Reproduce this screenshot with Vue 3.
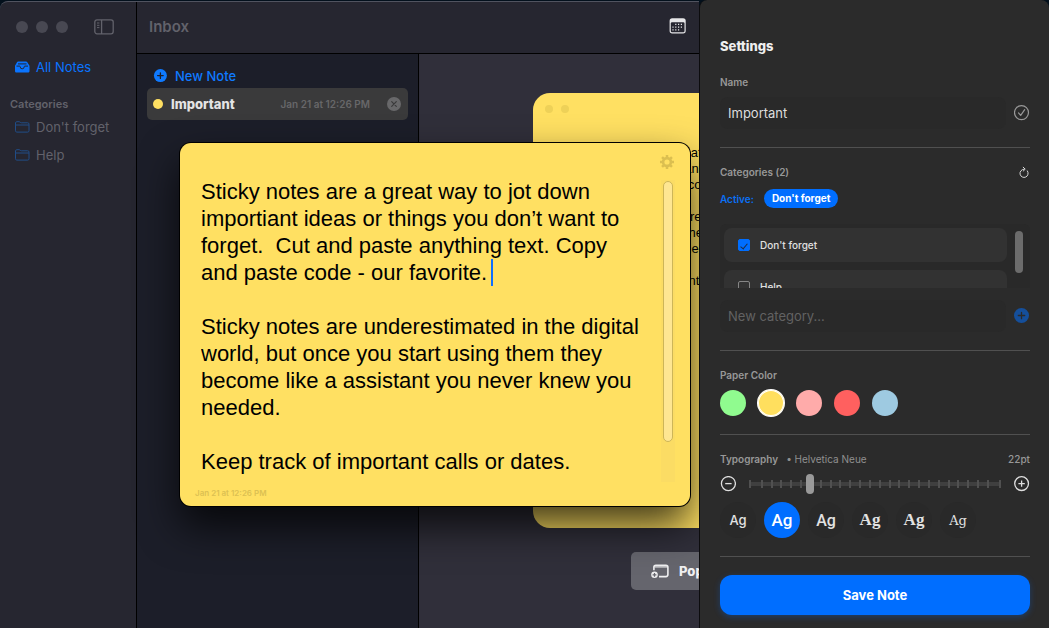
<template>
  <div class="desktop">
    <main class="app-window">
      <aside class="sidebar">
        <div class="sidebar__bar">
          <span v-for="n in 3" :key="n" class="sidebar__light"></span>
          <button class="icon-button sidebar__toggle" type="button" aria-label="Toggle sidebar">
            <svg width="20" height="16" viewBox="0 0 20 16" fill="none" stroke="currentColor">
              <rect x="0.8" y="0.8" width="18.4" height="14" rx="2.2" stroke-width="1.3" />
              <path d="M7.6 1v14" stroke-width="1.3" />
              <path d="M3 4h2.4M3 6.3h2.4M3 8.6h2.4" stroke-width="1" />
            </svg>
          </button>
        </div>
        <nav class="sidebar__nav">
          <a class="sidebar__link sidebar__link--active" href="#all">
            <svg width="16" height="12" viewBox="0 0 16 12">
              <path
                d="M4.2.5h7.8c.6 0 1 .3 1.3.8l2.2 3.5V10c0 1-.7 1.600-1.600 1.600H2.600C1.700 11.600 1 11 1 10V4.800l2-3.500C3.300.8 3.600.5 4.200.5z"
                fill="currentColor"
              />
              <path d="M2.500 5.100h3.100c.4 0 .5.3.6.7a2 2 0 0 0 4 0c.1-.4.2-.7.6-.7H14M4 2.900h8.500" fill="none" stroke="#262630" stroke-width="1" />
            </svg>
            <span>All Notes</span>
          </a>
          <h2 class="sidebar__heading">Categories</h2>
          <a v-for="name in categoryNames" :key="name" class="sidebar__link" href="#category">
            <svg class="sidebar__folder" width="16" height="12" viewBox="0 0 16 12" fill="none" stroke="currentColor">
              <path d="M1.500 9.800V2c0-.8.5-1.300 1.300-1.300h2.400c.9 0 1.100 1.100 2 1.100h6.500c.9 0 1.300.5 1.300 1.300v6.700c0 .8-.5 1.300-1.300 1.300H2.800c-.8 0-1.300-.5-1.300-1.300zM1.500 4H15" />
            </svg>
            <span>{{ name }}</span>
          </a>
        </nav>
      </aside>

      <div class="workspace">
        <header class="toolbar">
          <h1 class="toolbar__title">Inbox</h1>
          <button class="icon-button toolbar__calendar" type="button" aria-label="Calendar">
            <svg width="18" height="17" viewBox="0 0 18 17">
              <path d="M3.200.2h10.900c1.700 0 2.600 1 2.600 2.500V13c0 1.600-.9 2.500-2.600 2.500H3.200C1.500 15.500.6 14.600.6 13V2.700C.6 1.200 1.500.2 3.200.2z" fill="currentColor" />
              <rect x="1.800" y="4.200" width="13.700" height="10" rx="1.200" fill="#262630" />
              <path d="M6.200 6.400h7.600M3.400 9.100h10.400M3.400 11.800h7.600" stroke="currentColor" stroke-width="1.200" stroke-dasharray="1.200 1.600" />
            </svg>
          </button>
        </header>

        <div class="workspace__panes">
          <section class="note-list">
            <button class="note-list__new" type="button">
              <svg width="14" height="14" viewBox="0 0 14 14">
                <circle cx="7.400" cy="6.600" r="6.500" fill="currentColor" />
                <path d="M7.400 3.800v5.600M4.600 6.600h5.600" stroke="#1c1e29" stroke-width="1.300" stroke-linecap="round" />
              </svg>
              <span>New Note</span>
            </button>
            <div class="note-list__item">
              <span class="note-list__dot"></span>
              <strong class="note-list__name">Important</strong>
              <time class="note-list__time">{{ stamp }}</time>
              <button class="icon-button note-list__delete" type="button" aria-label="Delete note">
                <svg width="14" height="14" viewBox="0 0 14 14">
                  <circle cx="7" cy="7" r="7" fill="currentColor" />
                  <path d="M4.700 4.700l4.600 4.600M9.300 4.700l-4.600 4.600" stroke="#3a3a3b" stroke-width="1.200" stroke-linecap="round" />
                </svg>
              </button>
            </div>
          </section>

          <section class="preview">
            <article class="preview__card">
              <div class="preview__dots"><span></span><span></span></div>
              <p class="preview__text">{{ noteText }}</p>
            </article>
            <button class="preview__popout" type="button">
              <svg width="18" height="15" viewBox="0 0 18 15" fill="none" stroke="currentColor">
                <path d="M2.900 6.300V3.200C2.900 1.900 3.600 1.200 4.900 1.200h10c1.300 0 2 .7 2 2v7.400c0 1.300-.7 2-2 2H8" stroke-width="1.600" />
                <path d="M3.500 2.900h13" stroke-width="1.200" />
                <circle cx="3.500" cy="10.800" r="3.300" fill="currentColor" stroke="none" />
                <path d="M3.500 8.900v3.800M1.600 10.800h3.800" stroke="#65656d" stroke-width="1.200" />
              </svg>
              <span>Pop Out</span>
            </button>
          </section>
        </div>
      </div>
    </main>

    <section class="sticky">
      <header class="sticky__bar">
        <button class="icon-button sticky__gear" type="button" aria-label="Note settings">
          <svg width="16" height="16" viewBox="0 0 16 16" fill="none" stroke="currentColor">
            <circle cx="8" cy="8" r="3.900" stroke-width="2.600" />
            <path
              d="M8 1v2.500M8 12.500V15M1 8h2.500M12.500 8H15M3.050 3.050l1.800 1.800M11.150 11.150l1.800 1.800M3.050 12.950l1.800-1.800M11.150 4.850l1.800-1.800"
              stroke-width="2.500"
            />
          </svg>
        </button>
      </header>
      <div class="sticky__body">
        <div class="sticky__page">
          <textarea v-model="noteText" class="sticky__text" aria-label="Note text" spellcheck="false"></textarea>
          <span class="sticky__caret"></span>
        </div>
        <div class="sticky__scroll"><div class="sticky__thumb"></div></div>
      </div>
      <time class="sticky__time">{{ stamp }}</time>
    </section>

    <aside class="settings">
      <h2 class="settings__title">Settings</h2>

      <form class="settings__group settings__group--first" @submit.prevent>
        <label class="settings__label" for="note-name">Name</label>
        <div class="settings__field">
          <input id="note-name" v-model="noteName" class="settings__input" type="text" />
          <button class="icon-button settings__confirm" type="submit" aria-label="Apply name">
            <svg width="16" height="16" viewBox="0 0 16 16" fill="none" stroke="currentColor">
              <circle cx="7.500" cy="7.600" r="7" stroke-width="1.200" />
              <path d="M4.500 7.900l2.200 2.500 4-5.700" stroke-width="1.200" stroke-linecap="round" stroke-linejoin="round" />
            </svg>
          </button>
        </div>
      </form>

      <section class="settings__group">
        <div class="settings__head">
          <h3 class="settings__label">Categories ({{ categoryNames.length }})</h3>
          <button class="icon-button settings__reload" type="button" aria-label="Reload categories">
            <svg width="11" height="12" viewBox="0 0 11 12" fill="none" stroke="currentColor" stroke-linecap="round" stroke-linejoin="round">
              <path d="M8.400 4.900A4.100 4.100 0 1 1 5 3.200M4.200 1.200l2 2-2 1.900" />
            </svg>
          </button>
        </div>
        <div class="settings__active">
          <span>Active:</span>
          <span v-for="name in activeCategories" :key="name" class="settings__pill">{{ name }}</span>
        </div>
        <div class="settings__list">
          <div class="settings__rows">
            <label v-for="name in categoryNames" :key="name" class="settings__row">
              <input v-model="activeCategories" class="settings__check" type="checkbox" :value="name" />
              <span>{{ name }}</span>
            </label>
          </div>
          <div class="settings__thumb"></div>
        </div>
        <div class="settings__field settings__field--new">
          <input
            v-model="newCategory"
            class="settings__input"
            type="text"
            placeholder="New category..."
            aria-label="New category"
          />
          <button class="icon-button settings__add" type="button" aria-label="Add category" @click="addCategory">
            <svg width="16" height="16" viewBox="0 0 16 16">
              <circle cx="7.500" cy="7.500" r="7.500" fill="currentColor" />
              <path d="M7.500 4.300v6.400M4.300 7.500h6.400" stroke="#2b2b2b" stroke-width="1.300" stroke-linecap="round" />
            </svg>
          </button>
        </div>
      </section>

      <section class="settings__group">
        <h3 class="settings__label">Paper Color</h3>
        <div class="settings__swatches">
          <button
            v-for="color in paperColors"
            :key="color"
            class="settings__swatch"
            :class="{ 'settings__swatch--selected': color === paperColor }"
            :style="{ backgroundColor: color }"
            type="button"
            :aria-label="color"
            @click="paperColor = color"
          ></button>
        </div>
      </section>

      <section class="settings__group">
        <div class="settings__head">
          <h3 class="settings__label">Typography</h3>
          <span class="settings__font-name">• Helvetica Neue</span>
          <output class="settings__size" for="font-size">{{ fontSize }}pt</output>
        </div>
        <div class="settings__sizer">
          <button class="icon-button" type="button" aria-label="Smaller text" @click="changeSize(-2)">
            <svg width="16" height="16" viewBox="0 0 16 16" fill="none" stroke="currentColor" stroke-width="1.300">
              <circle cx="8.400" cy="7.600" r="7" />
              <path d="M5.200 7.600h6.400" />
            </svg>
          </button>
          <div class="slider">
            <div class="slider__ticks"><i v-for="n in 26" :key="n"></i></div>
            <input
              id="font-size"
              v-model.number="fontSize"
              class="slider__input"
              type="range"
              min="10"
              max="60"
              step="2"
              aria-label="Font size"
            />
          </div>
          <button class="icon-button" type="button" aria-label="Larger text" @click="changeSize(2)">
            <svg width="16" height="16" viewBox="0 0 16 16" fill="none" stroke="currentColor" stroke-width="1.300">
              <circle cx="7.600" cy="7.600" r="6.900" />
              <path d="M4.400 7.600h6.400M7.600 4.400v6.400" />
            </svg>
          </button>
        </div>
        <div class="settings__fonts">
          <button
            v-for="face in faces"
            :key="face"
            class="settings__face"
            :class="[`settings__face--${face}`, { 'settings__face--selected': face === selectedFace }]"
            type="button"
            :aria-label="face"
            @click="selectedFace = face"
          >
            Ag
          </button>
        </div>
      </section>

      <section class="settings__group">
        <button class="settings__save" type="button">Save Note</button>
      </section>
    </aside>
  </div>
</template>

<script setup>
  import { ref } from 'vue'

  const stamp = 'Jan 21 at 12:26 PM'

  const noteName = ref('Important')
  const noteText = ref(
    [
      'Sticky notes are a great way to jot down importiant ideas or things you don’t want to forget.  Cut and paste anything text. Copy and paste code - our favorite.',
      'Sticky notes are underestimated in the digital world, but once you start using them they become like a assistant you never knew you needed.',
      'Keep track of important calls or dates.'
    ].join('\n\n')
  )

  const categoryNames = ref(["Don't forget", 'Help'])
  const activeCategories = ref(["Don't forget"])
  const newCategory = ref('')

  const paperColors = ['#90fb8f', '#ffdf5e', '#ffabaa', '#ff605f', '#9ecae1']
  const paperColor = ref('#ffdf5e')

  const faces = ['system', 'helvetica', 'avenir', 'georgia', 'palatino', 'typewriter']
  const selectedFace = ref('helvetica')
  const fontSize = ref(22)

  const changeSize = (step) => {
    fontSize.value = Math.min(60, Math.max(10, fontSize.value + step))
  }

  const addCategory = () => {
    const name = newCategory.value.trim()
    if (!name || categoryNames.value.includes(name)) {
      return
    }

    categoryNames.value.push(name)
    newCategory.value = ''
  }
</script>

<style>
  body {
    background: #03101c;
  }
</style>

<style scoped>
  .desktop {
    position: relative;
    display: flex;
    height: 100vh;
    min-height: 628px;
    overflow: hidden;
    font-family: Inter, "Liberation Sans", sans-serif;
    font-size: 13px;
  }

  .desktop *,
  .desktop *::before {
    box-sizing: border-box;
  }

  h1,
  h2,
  h3,
  p {
    margin: 0;
  }

  button,
  input {
    font-family: inherit;
  }

  svg {
    display: block;
    flex: none;
  }

  .icon-button {
    padding: 0;
    border: none;
    background: none;
    color: inherit;
  }

  .app-window {
    display: flex;
    flex: 1;
    min-width: 0;
    margin-top: 1px;
    border-top: 1px solid #50535f;
    border-top-left-radius: 8px;
    overflow: hidden;
    background: #262630;
  }

  .sidebar {
    flex: 0 0 137px;
    border-right: 1px solid #000;
    color: #62626b;
  }

  .sidebar__bar {
    display: flex;
    align-items: center;
    gap: 8px;
    height: 50px;
    padding-left: 16px;
  }

  .sidebar__light {
    width: 12px;
    height: 12px;
    border-radius: 50%;
    background: #484852;
  }

  .sidebar__toggle {
    margin-left: 18px;
  }

  .sidebar__nav {
    display: flex;
    flex-direction: column;
  }

  .sidebar__link {
    display: flex;
    align-items: center;
    gap: 6px;
    height: 28px;
    padding-left: 14px;
    color: inherit;
    text-decoration: none;
  }

  .sidebar__link--active {
    height: 30px;
    color: #0a74ff;
  }

  .sidebar__folder {
    color: #214d87;
  }

  .sidebar__heading {
    margin-top: 13px;
    padding-left: 10px;
    font-size: 11px;
    line-height: 18px;
    font-weight: 600;
  }

  .workspace {
    display: flex;
    flex: 1;
    flex-direction: column;
    min-width: 0;
  }

  .toolbar {
    display: flex;
    align-items: center;
    justify-content: space-between;
    height: 52px;
    padding: 0 12px 2px;
    border-bottom: 1px solid #000;
  }

  .toolbar__title {
    color: #62626b;
    font-size: 15px;
    font-weight: 600;
  }

  .toolbar__calendar {
    color: #e6e6e8;
  }

  .workspace__panes {
    display: flex;
    flex: 1;
    min-height: 0;
  }

  .note-list {
    flex: 0 0 282px;
    padding: 10px;
    border-right: 1px solid #000;
    background: #1c1e29;
  }

  .note-list__new {
    display: flex;
    align-items: center;
    gap: 8px;
    height: 24px;
    padding: 0 6px;
    border: none;
    background: none;
    color: #0f7aff;
    font-size: 13px;
    font-weight: 500;
  }

  .note-list__item {
    display: flex;
    align-items: center;
    height: 32px;
    padding: 0 7px 0 6px;
    border-radius: 5px;
    background: #3a3a3b;
  }

  .note-list__dot {
    width: 10px;
    height: 10px;
    border-radius: 50%;
    background: #ffe062;
  }

  .note-list__name {
    margin-left: 8px;
    color: #e4e4e5;
    font-weight: 800;
  }

  .note-list__time {
    margin-left: auto;
    color: #676769;
    font-size: 10px;
    font-weight: 600;
  }

  .note-list__delete {
    margin-left: 17px;
    color: #68686a;
  }

  .preview {
    flex: 1;
    min-width: 0;
    padding: 39px 0 0 114px;
    overflow: hidden;
    background: #302f3a;
  }

  .preview__card {
    width: 390px;
    height: 435px;
    padding: 12px;
    border-radius: 17px;
    background: #ffe062;
  }

  .preview__dots {
    display: flex;
    gap: 8px;
  }

  .preview__dots span {
    width: 8px;
    height: 8px;
    border-radius: 50%;
    background: #eed158;
  }

  .preview__text {
    width: 338px;
    margin: 32px 0 0 20px;
    color: #000;
    font-family: "Liberation Sans", Arial, sans-serif;
    font-size: 13px;
    line-height: 16px;
    white-space: pre-wrap;
  }

  .preview__popout {
    display: flex;
    align-items: center;
    gap: 10px;
    width: 194px;
    height: 38px;
    margin: 24px 0 0 98px;
    padding: 0 20px;
    border: none;
    border-radius: 5px;
    background: #65656d;
    color: #f0f0f1;
    font-size: 13px;
    font-weight: 800;
    white-space: nowrap;
  }

  .sticky {
    position: absolute;
    left: 180px;
    top: 143px;
    display: flex;
    flex-direction: column;
    width: 510px;
    height: 363px;
    padding: 11px 15px 8px;
    border-radius: 11px;
    background: #ffe062;
    box-shadow: 0 0 0 1px #000, 0 20px 40px rgba(0, 0, 0, 0.75);
  }

  .sticky__bar {
    display: flex;
    justify-content: flex-end;
    height: 26px;
    align-items: flex-start;
  }

  .sticky__gear {
    color: #dbbf50;
  }

  .sticky__body {
    display: flex;
    flex: 1;
    min-height: 0;
    padding-left: 6px;
  }

  .sticky__page {
    position: relative;
    flex: 1;
    margin-top: -2px;
  }

  .sticky__text {
    display: block;
    width: 100%;
    height: 100%;
    padding: 0 14px 0 0;
    border: none;
    outline: none;
    resize: none;
    overflow: hidden;
    background: none;
    color: #000;
    font-family: "Liberation Sans", Arial, sans-serif;
    font-size: 22px;
    line-height: 27px;
  }

  .sticky__caret {
    position: absolute;
    left: 290px;
    top: 81px;
    width: 2px;
    height: 27px;
    background: #0f6fff;
  }

  .sticky__scroll {
    width: 14px;
    padding: 1px 2px 40px;
    background: #fbdc64;
  }

  .sticky__thumb {
    height: 100%;
    border: 1px solid #cdb558;
    border-radius: 5px;
    background: #fee692;
  }

  .sticky__time {
    margin-top: 6px;
    color: #dcc052;
    font-size: 8px;
    line-height: 10px;
    font-weight: 600;
  }

  .settings {
    position: relative;
    flex: 0 0 350px;
    padding: 36px 19px 13px 20px;
    border-left: 1px solid #0c0c0e;
    border-radius: 8px 8px 0 0;
    background: #2b2b2b;
    color: #989898;
  }

  .settings__title {
    color: #efefef;
    font-size: 13px;
    line-height: 20px;
    font-weight: 800;
  }

  .settings__group {
    padding: 17px 0 18px;
    border-top: 1px solid #505050;
  }

  .settings__group--first {
    padding-top: 19px;
    border-top: none;
  }

  .settings__group:last-child {
    padding: 18px 0 0;
  }

  .settings__head {
    display: flex;
    align-items: center;
    height: 14px;
  }

  .settings__label {
    display: block;
    font-size: 10px;
    line-height: 14px;
    font-weight: 600;
  }

  .settings__field {
    display: flex;
    align-items: center;
    gap: 8px;
    margin-top: 8px;
  }

  .settings__field--new {
    margin-top: 12px;
  }

  .settings__input {
    flex: 1;
    min-width: 0;
    height: 32px;
    padding: 0 8px;
    border: none;
    border-radius: 8px;
    outline: none;
    background: #292929;
    color: #dedede;
    font-size: 13px;
  }

  .settings__input::placeholder {
    color: #626262;
    opacity: 1;
  }

  .settings__confirm {
    color: #999;
  }

  .settings__reload {
    margin-left: auto;
    color: #d6d6d6;
  }

  .settings__add {
    color: #154f9b;
  }

  .settings__active {
    display: flex;
    align-items: center;
    gap: 10px;
    height: 19px;
    margin-top: 10px;
    color: #0a70f5;
    font-size: 10px;
    font-weight: 600;
  }

  .settings__pill {
    padding: 0 8px;
    border-radius: 10px;
    background: #006eff;
    color: #fff;
    font-size: 10px;
    font-weight: 700;
    line-height: 19px;
  }

  .settings__list {
    display: flex;
    gap: 8px;
    height: 64px;
    margin-top: 16px;
    padding: 4px 7px 0 4px;
    border-radius: 6px 6px 0 0;
    overflow: hidden;
    background: #292929;
  }

  .settings__rows {
    display: flex;
    flex: 1;
    flex-direction: column;
    gap: 8px;
  }

  .settings__row {
    display: flex;
    flex: none;
    align-items: center;
    gap: 10px;
    height: 34px;
    padding: 0 14px;
    border-radius: 8px;
    background: #323232;
    color: #e0e0e0;
    font-size: 10px;
    font-weight: 500;
  }

  .settings__check {
    display: grid;
    place-items: center;
    width: 12px;
    height: 12px;
    margin: 0;
    border: 1px solid #858585;
    border-radius: 2px;
    appearance: none;
  }

  .settings__check:checked {
    border-color: #006eff;
    background: #006eff;
  }

  .settings__check:checked::before {
    content: "";
    width: 4px;
    height: 7px;
    border: solid #1d2c45;
    border-width: 0 1px 1px 0;
    transform: rotate(40deg);
  }

  .settings__thumb {
    width: 8px;
    height: 42px;
    margin-top: 3px;
    border-radius: 4px;
    background: #6c6c6c;
  }

  .settings__swatches {
    display: flex;
    gap: 12px;
    margin-top: 8px;
  }

  .settings__swatch {
    width: 26px;
    height: 26px;
    padding: 0;
    border: none;
    border-radius: 50%;
  }

  .settings__swatch--selected {
    box-shadow: inset 0 0 0 1px #fff, 0 0 0 1px #fff;
  }

  .settings__font-name {
    margin-left: 8px;
    font-size: 10px;
    color: #909090;
  }

  .settings__size {
    margin-left: auto;
    font-size: 10px;
    font-weight: 500;
  }

  .settings__sizer {
    display: flex;
    align-items: center;
    gap: 10px;
    height: 20px;
    margin-top: 8px;
    color: #dfdfdf;
  }

  .slider {
    position: relative;
    flex: 1;
    height: 20px;
  }

  .slider__ticks {
    position: absolute;
    inset: 6px 3px;
    display: flex;
    justify-content: space-between;
    background: linear-gradient(#3f3f3f, #3f3f3f) center / 100% 4px no-repeat;
  }

  .slider__ticks i {
    width: 2px;
    background: #505050;
  }

  .slider__ticks i:first-child {
    margin-right: 2px;
  }

  .slider__ticks i:last-child {
    margin-left: 2px;
  }

  .slider__input {
    position: relative;
    display: block;
    width: 100%;
    height: 20px;
    margin: 0;
    background: none;
    appearance: none;
  }

  .slider__input::-webkit-slider-thumb {
    width: 8px;
    height: 20px;
    border-radius: 4px;
    background: #999;
    appearance: none;
  }

  .settings__fonts {
    display: flex;
    gap: 8px;
    margin-top: 8px;
  }

  .settings__face {
    width: 36px;
    height: 36px;
    padding: 0;
    border: none;
    border-radius: 50%;
    background: #292929;
    color: #e2e2e2;
    font-size: 16px;
    font-weight: 500;
  }

  .settings__face--selected {
    background: #006eff;
    color: #fff;
  }

  .settings__face--system {
    font-size: 13px;
  }

  .settings__face--helvetica {
    font-family: Roboto, "Liberation Sans", sans-serif;
    font-size: 17px;
  }

  .settings__face--avenir {
    font-family: Roboto, "Liberation Sans", sans-serif;
  }

  .settings__face--georgia,
  .settings__face--palatino {
    font-family: "Liberation Serif", serif;
    font-size: 17px;
    font-weight: 700;
  }

  .settings__face--typewriter {
    font-family: "DejaVu Serif", serif;
    font-size: 13px;
    font-weight: 400;
  }

  .settings__save {
    width: 100%;
    height: 40px;
    border: none;
    border-radius: 12px;
    background: #006eff;
    color: #fff;
    font-size: 13px;
    font-weight: 700;
    box-shadow: 0 2px 6px rgba(0, 110, 255, 0.3);
  }
</style>
